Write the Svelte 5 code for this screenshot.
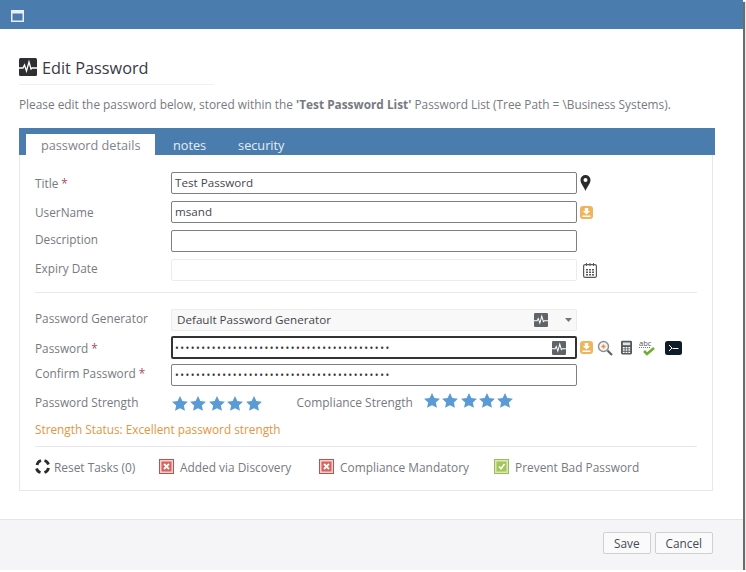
<script lang="ts">
	const dots = '•'.repeat(41);
	const stars = [0, 1, 2, 3, 4];
	const tabs = ['password details', 'notes', 'security'];
</script>

{#snippet pulse(size: number, bg: string)}
	<svg class="pulse" width={size} height={size} viewBox="0 0 18 18">
		<rect width="18" height="18" rx="1.5" fill={bg} />
		<path d="M0 10h4l1.5-3 2 6 2.500-9 2 7 1.200-1H18" fill="none" stroke="#fff" stroke-width="1.300" />
	</svg>
{/snippet}

{#snippet star()}
	<svg width="16" height="15" viewBox="0 0 18 17">
		<path d="M9 0l2.700 5.600 6.300.8-4.600 4.300 1.200 6.100-5.600-3-5.600 3 1.200-6.100L0 6.400l6.300-.8z" fill="#5b9bd5" />
	</svg>
{/snippet}

{#snippet download()}
	<svg width="13" height="13" viewBox="0 0 13 13">
		<rect width="13" height="13" rx="3" fill="#f0b45c" />
		<path d="M4.800 2h3.400v3h2L6.500 8.400 2.800 5h2z" fill="#fff" />
		<rect x="2.500" y="9.500" width="8" height="1.500" fill="#fff" />
	</svg>
{/snippet}

{#snippet check(kind: 'no' | 'yes')}
	{#if kind === 'no'}
		<svg class="check" width="15" height="15" viewBox="0 0 15 15">
			<rect x=".5" y=".5" width="14" height="14" fill="#f3d3cf" stroke="#c0504d" />
			<rect x="2.500" y="2.500" width="10" height="10" fill="#d9635e" />
			<path d="M5 5l5 5M10 5l-5 5" stroke="#fff" stroke-width="1.800" />
		</svg>
	{:else}
		<svg class="check" width="15" height="15" viewBox="0 0 15 15">
			<rect x=".5" y=".5" width="14" height="14" fill="#dbe8b8" stroke="#9bbb59" />
			<rect x="2.500" y="2.500" width="10" height="10" fill="#a4c55a" />
			<path d="M5 7.500l2 2.200L10.500 5" fill="none" stroke="#fff" stroke-width="1.500" />
		</svg>
	{/if}
{/snippet}

<div class="dialog">
	<header class="titlebar">
		<svg width="13" height="12" viewBox="0 0 13 12">
			<rect x=".75" y=".75" width="11.500" height="10.500" fill="#4a7dae" stroke="#e8eff6" stroke-width="1.500" />
			<rect x="1" y="1" width="11" height="2.500" fill="#e8eff6" />
		</svg>
	</header>

	<main class="body">
		<h1>{@render pulse(18, '#2f2f33')}<span>Edit Password</span></h1>
		<p class="intro">
			Please edit the password below, stored within the <b>'Test Password List'</b> Password List (Tree Path = \Business Systems).
		</p>

		<nav class="tabbar">
			{#each tabs as tab, i}
				<span class="tab" class:active={i === 0}>{tab}</span>
			{/each}
		</nav>

		<section class="panel">
			<div class="row">
				<span class="label">Title <i>*</i></span>
				<div class="field">Test Password</div>
				<svg class="after" width="11" height="16" viewBox="0 0 11 16">
					<path fill-rule="evenodd" d="M5.500 0a5 5 0 0 1 5 5c0 3.500-3.500 7-5 11C4 12 .5 8.500.5 5a5 5 0 0 1 5-5zm0 3a2 2 0 1 0 0 4 2 2 0 0 0 0-4z" fill="#2b2b2e" />
				</svg>
			</div>
			<div class="row">
				<span class="label">UserName</span>
				<div class="field">msand</div>
				<span class="after">{@render download()}</span>
			</div>
			<div class="row">
				<span class="label up">Description</span>
				<div class="field"></div>
			</div>
			<div class="row">
				<span class="label up">Expiry Date</span>
				<div class="field disabled"></div>
				<svg class="after cal" width="14" height="15" viewBox="0 0 14 15">
					<rect x=".6" y="1.600" width="12.800" height="12.800" rx="1.500" fill="#fff" stroke="#55585c" stroke-width="1.200" />
					<path d="M3.500 0v3M7 0v3M10.500 0v3" stroke="#55585c" />
					<path d="M3 6h2v1.500H3zM6 6h2v1.500H6zM9 6h2v1.500H9zM3 8.500h2V10H3zM6 8.500h2V10H6zM9 8.500h2V10H9zM3 11h2v1.500H3zM6 11h2v1.500H6zM9 11h2v1.500H9z" fill="#55585c" />
				</svg>
			</div>

			<hr class="first" />

			<div class="row generator">
				<span class="label up">Password Generator</span>
				<div class="field select">
					<span class="grow">Default Password Generator</span>
					{@render pulse(14, '#5f6468')}
					<svg class="caret" width="7" height="4" viewBox="0 0 9 5"><path d="M0 0h9L4.500 5z" fill="#777" /></svg>
				</div>
			</div>
			<div class="row password">
				<span class="label">Password <i>*</i></span>
				<div class="field focused">
					<span class="grow dots">{dots}</span>
					{@render pulse(14, '#5f6468')}
				</div>
				<div class="after tools">
					{@render download()}
					<svg width="16" height="16" viewBox="0 0 16 16">
						<circle cx="6.500" cy="6.500" r="5" fill="#f4f4f4" stroke="#8a8f94" stroke-width="1.400" />
						<path d="M4.500 6.500h4M6.500 4.500v4" stroke="#e8913a" stroke-width="1.500" />
						<path d="M10.500 10.500l4.500 4.500" stroke="#5f6468" stroke-width="2.200" />
					</svg>
					<svg class="calc" width="11" height="15" viewBox="0 0 12 15">
						<rect width="12" height="15" rx="1.500" fill="#55595d" />
						<rect x="2" y="2" width="8" height="3" fill="#dfe3e6" />
						<path d="M2 7h2v1.500H2zM5 7h2v1.500H5zM8 7h2v1.500H8zM2 9.500h2V11H2zM5 9.500h2V11H5zM8 9.500h2V11H8zM2 12h2v1.500H2zM5 12h2v1.500H5zM8 12h2v1.500H8z" fill="#fff" />
					</svg>
					<svg class="abc" width="17" height="17" viewBox="0 0 17 17">
						<path d="M0 8.500h12" stroke="#777" stroke-dasharray="1 1" />
						<text x="0" y="6.500" font-size="7.500" font-family="Open Sans" fill="#555">abc</text>
						<path d="M5 12l3 3 7-6" fill="none" stroke="#6fae2e" stroke-width="2.600" />
					</svg>
					<svg class="term" width="17" height="14" viewBox="0 0 17 14">
						<rect width="17" height="14" rx="2.500" fill="#0f1d2b" />
						<path d="M4 4l3 3-3 3" fill="none" stroke="#fff" />
						<path d="M7.500 7.500h6" stroke="#fff" />
					</svg>
				</div>
			</div>
			<div class="row confirm">
				<span class="label up">Confirm Password <i>*</i></span>
				<div class="field"><span class="dots">{dots}</span></div>
			</div>

			<div class="strengths">
				<span class="label">Password Strength</span>
				<div class="stars">{#each stars as s (s)}{@render star()}{/each}</div>
				<span class="compliance">Compliance Strength</span>
				<div class="stars lift">{#each stars as s (s)}{@render star()}{/each}</div>
			</div>

			<p class="status">Strength Status: Excellent password strength</p>

			<hr />

			<div class="options">
				<span class="opt reset">
					<svg width="15" height="15" viewBox="0 0 15 15">
						<path d="M2 6a6 6 0 0 1 4-4.500M9.500 1.500A6 6 0 0 1 13.500 5.500M13.500 9a6 6 0 0 1-4 4.500M5.500 13.500A6 6 0 0 1 1.500 9.500" fill="none" stroke="#2b2b2e" stroke-width="2.800" />
					</svg>
					Reset Tasks (0)
				</span>
				<span class="opt discovery">{@render check('no')}Added via Discovery</span>
				<span class="opt mandatory">{@render check('no')}Compliance Mandatory</span>
				<span class="opt">{@render check('yes')}Prevent Bad Password</span>
			</div>
		</section>
	</main>

	<footer class="footer">
		<button>Save</button>
		<button>Cancel</button>
	</footer>
</div>

<style>
	:global(body) {
		margin: 0;
		background: #fff;
	}
	.dialog {
		width: 743px;
		height: 570px;
		box-sizing: border-box;
		display: flex;
		flex-direction: column;
		background: #fff;
		box-shadow: 2px 2px 1px #6c6c6c;
		font-family: 'Open Sans', sans-serif;
		font-size: 11.800px;
		color: #777a80;
		overflow: hidden;
	}
	.titlebar {
		height: 29px;
		flex: none;
		box-sizing: border-box;
		padding: 10px 0 0 11px;
		background: #4a7dae;
		line-height: 0;
	}
	.body {
		flex: 1;
		padding: 28px 28px 0 19px;
	}
	h1 {
		width: 195px;
		height: 27px;
		margin: 0;
		display: flex;
		align-items: flex-start;
		gap: 5px;
		border-bottom: 1px solid #f0f0f4;
		font-size: 16.300px;
		line-height: 22px;
		font-weight: 400;
		color: #3a3a44;
	}
	h1 .pulse {
		margin-top: 1px;
	}
	.intro {
		margin: 12px 0 0;
		height: 31px;
		line-height: 15px;
		font-size: 11.850px;
		white-space: nowrap;
	}
	.tabbar {
		height: 27px;
		width: 696px;
		box-sizing: border-box;
		display: flex;
		align-items: flex-end;
		padding-left: 7px;
		background: #4a7dae;
		color: #e4edf5;
	}
	.tab {
		height: 21px;
		padding: 0 16px 0 15px;
		margin-right: 1px;
		line-height: 22px;
		font-size: 12.700px;
		white-space: nowrap;
	}
	.tab.active {
		width: 99px;
		margin-right: 3px;
		padding: 0 15px;
		background: #fff;
		color: #808389;
	}
	.panel {
		width: 694px;
		height: 336px;
		box-sizing: border-box;
		padding: 17px 15px 0 15px;
		border: 1px solid #e8e8ec;
		border-top: 0;
	}
	.row {
		display: flex;
		align-items: center;
		height: 22px;
		margin-bottom: 7px;
	}
	.label {
		width: 136px;
		flex: none;
		white-space: nowrap;
		line-height: 16px;
	}
	.label.up {
		margin-top: -5px;
	}
	.label i {
		font-style: normal;
		color: #b0476a;
	}
	.field {
		width: 406px;
		height: 22px;
		flex: none;
		box-sizing: border-box;
		display: flex;
		align-items: center;
		padding: 0 3px;
		border: 1px solid #7f7f7f;
		border-radius: 2px;
		font-size: 11.650px;
		line-height: 20px;
		color: #44464c;
		white-space: nowrap;
	}
	.field.disabled {
		border-color: #ececec;
	}
	.field.select {
		padding: 0 5px;
		border-color: #ececec;
		background: #f8f8f8;
	}
	.field.focused {
		height: 23px;
		border: 2px solid #333;
		padding-right: 9px;
		padding-left: 2px;
	}
	.grow {
		flex: 1;
	}
	.dots {
		font-size: 10px;
		letter-spacing: 1.500px;
		color: #33353a;
	}
	.caret {
		margin: 0 -1px 0 17px;
	}
	.after {
		margin-left: 3px;
		line-height: 0;
	}
	.after.cal {
		margin-left: 6px;
	}
	.tools {
		display: flex;
		align-items: center;
		gap: 4px;
	}
	.calc {
		margin-left: 4px;
	}
	.abc {
		margin-left: 3px;
	}
	.term {
		margin-left: 5px;
	}
	hr {
		height: 1px;
		margin: 0;
		border: 0;
		background: #e8e8ec;
	}
	hr.first {
		margin: 11px 0 16px;
	}
	.row.generator {
		margin-bottom: 5px;
	}
	.row.password {
		height: 23px;
		margin-bottom: 5px;
	}
	.row.confirm {
		margin-bottom: 7px;
	}
	.strengths {
		display: flex;
		align-items: center;
		height: 18px;
	}
	.stars {
		display: flex;
		gap: 2.400px;
		margin: 2px 0 0 1px;
		line-height: 0;
	}
	.stars.lift {
		margin: -4px 0 0;
	}
	.compliance {
		margin: 0 11px 0 35px;
		font-size: 11.950px;
	}
	.status {
		margin: 10px 0 9px;
		line-height: 16px;
		color: #e2963e;
	}
	.options {
		display: flex;
		align-items: center;
		margin-top: 11px;
		height: 17px;
		font-size: 11.900px;
	}
	.opt {
		display: flex;
		align-items: center;
		gap: 6px;
		white-space: nowrap;
	}
	.reset {
		gap: 4px;
		width: 124px;
	}
	.discovery {
		width: 160px;
	}
	.mandatory {
		width: 175px;
	}
	.footer {
		height: 51px;
		flex: none;
		box-sizing: border-box;
		display: flex;
		justify-content: flex-end;
		gap: 4px;
		padding: 12px 30px 0 0;
		border-top: 1px solid #e4e4e8;
		background: #f5f5f7;
	}
	button {
		height: 22px;
		padding: 0 10px;
		border: 1px solid #d0d0d4;
		border-radius: 2px;
		background: #fafafa;
		font: 11.800px 'Open Sans', sans-serif;
		color: #444a55;
	}
</style>
